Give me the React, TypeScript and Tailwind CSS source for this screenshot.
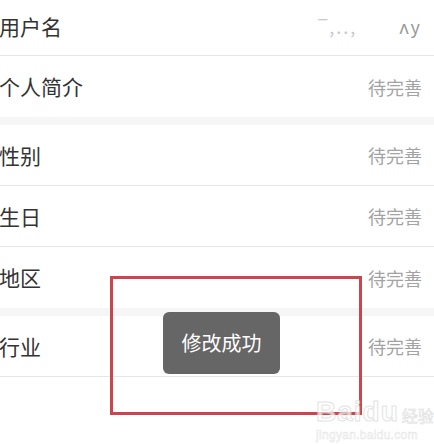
import React from 'react';

const font = { fontFamily: '"Noto Sans CJK SC", "Noto Sans", sans-serif' };

interface RowProps {
  label: string;
  value?: React.ReactNode;
  first?: boolean;
  divider?: boolean;
}

const Row: React.FC<RowProps> = ({ label, value, first, divider = true }) => (
  <div
    className={`flex items-center justify-between pr-3 bg-white ${first ? 'h-[56px] pb-[3px]' : 'h-[61px]'} ${
      divider ? 'border-b border-[#e6e6e6]' : ''
    }`}
  >
    <span className="text-[21px] text-[#333] -ml-[1px] leading-none">{label}</span>
    <span className="text-[18px] text-[#a3a3a3] leading-none">{value ?? '待完善'}</span>
  </div>
);

const App: React.FC = () => {
  return (
    <div className="relative w-[434px] h-[444px] bg-white overflow-hidden" style={font}>
      <div className="flex flex-col">
        <Row
          first
          label="用户名"
          value={<span className="text-[#c8c8c8] tracking-[2px]">‾,..,&nbsp;&nbsp;&nbsp;&nbsp;&nbsp;&nbsp;&nbsp;<span className="text-[#999]">ʌy</span></span>}
        />
        <Row label="个人简介" divider={false} />
        <div className="h-[8px] bg-[#f6f6f6]" />
        <Row label="性别" />
        <Row label="生日" />
        <Row label="地区" divider={false} />
        <div className="h-[8px] bg-[#f6f6f6]" />
        <Row label="行业" />
      </div>

      {/* Red highlight box */}
      <div className="absolute left-[110px] top-[276px] w-[252px] h-[139px] border-[3px] border-[#c9464e]" />

      {/* Toast */}
      <div className="absolute left-[163px] top-[312px] w-[117px] h-[62px] rounded-[6px] bg-[#666] flex items-center justify-center">
        <span className="text-[20px] text-white leading-none">修改成功</span>
      </div>

      {/* Watermark */}
      <div className="absolute left-[316px] top-[398px] flex flex-col items-start opacity-70 pointer-events-none">
        <div className="flex items-end gap-[3px]">
          <span
            className="text-[28px] font-bold leading-none text-white tracking-[1px]"
            style={{ fontFamily: '"Liberation Sans", sans-serif', WebkitTextStroke: '1px #d8d8d8' }}
          >
            Baidu
          </span>
          <span className="text-[16px] leading-none text-white mb-[3px]" style={{ WebkitTextStroke: '0.6px #d0d0d0' }}>
            经验
          </span>
        </div>
        <span
          className="text-[12px] leading-none text-white mt-[3px] tracking-[0.3px]"
          style={{ fontFamily: '"Liberation Sans", sans-serif', WebkitTextStroke: '0.5px #d8d8d8' }}
        >
          jingyan.baidu.com
        </span>
      </div>
    </div>
  );
};

export default App;
